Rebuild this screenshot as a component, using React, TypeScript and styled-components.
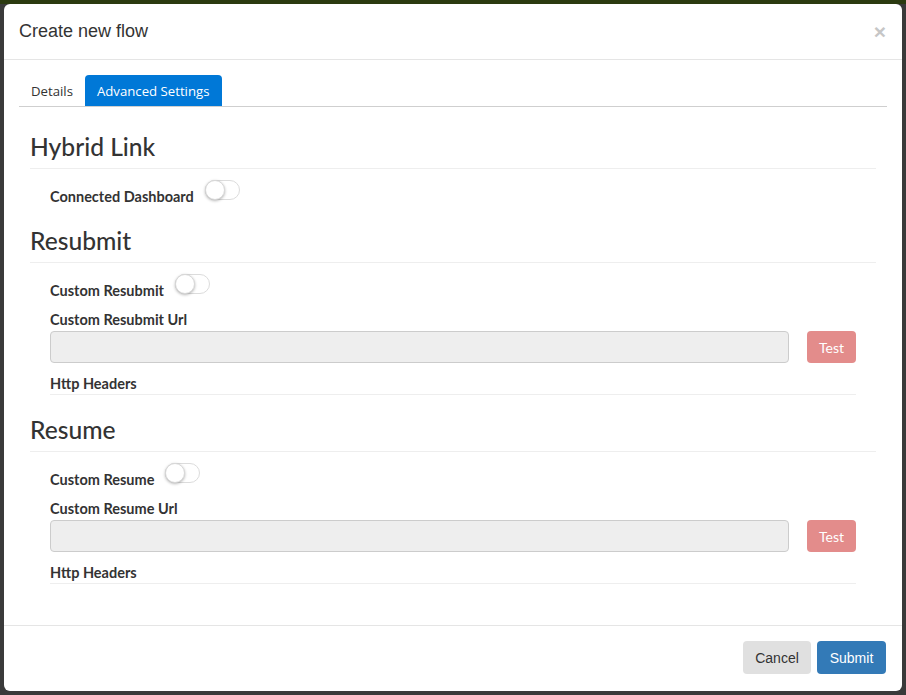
import styled, { createGlobalStyle } from 'styled-components'

const GlobalStyle = createGlobalStyle`
  html, body {
    margin: 0;
    padding: 0;
  }
  body {
    background: linear-gradient(#2b3a10 0, #2b3a10 4px, #3a3a3a 4px);
    font-family: Lato, "Open Sans", sans-serif;
    color: #333;
  }
`

const Backdrop = styled.div`
  padding: 4px;
  height: 687px;
`

const Modal = styled.div`
  width: 898px;
  height: 687px;
  background: #fff;
  border-radius: 6px;
  display: flex;
  flex-direction: column;
  overflow: hidden;
`

const Header = styled.div`
  height: 55px;
  padding: 0 15px;
  border-bottom: 1px solid #e5e5e5;
  display: flex;
  align-items: center;
  justify-content: space-between;
`

const Title = styled.h4`
  margin: 0;
  font-family: "Liberation Sans", Arial, sans-serif;
  font-size: 18px;
  font-weight: normal;
  color: #333;
`

const Close = styled.button`
  border: 0;
  background: none;
  padding: 0;
  margin-right: 1px;
  font-family: "Liberation Sans", Arial, sans-serif;
  font-size: 21px;
  font-weight: bold;
  line-height: 1;
  color: #c6c6c6;
  cursor: pointer;
`

const Body = styled.div`
  flex: 1;
  padding: 15px 15px 0;
`

const Tabs = styled.div`
  display: flex;
  gap: 1px;
  height: 31px;
  border-bottom: 1px solid #cfcfcf;
`

type TabProps = { active?: boolean }

const Tab = styled.div<TabProps>`
  padding: 0 ${(p) => (p.active ? 13 : 11)}px 0 12px;
  display: flex;
  align-items: center;
  font-family: "Open Sans", "Noto Sans", sans-serif;
  font-size: 13.2px;
  border-radius: 4px 4px 0 0;
  background: ${(p) => (p.active ? '#0078d7' : 'transparent')};
  color: ${(p) => (p.active ? '#fff' : '#333')};
`

const Content = styled.div`
  padding: 5px 11px 0;
`

const Section = styled.div`
  padding-top: 22px;
`

const SectionTitle = styled.h3`
  margin: 0;
  font-size: 24.6px;
  font-weight: 500;
  line-height: 26px;
  padding-bottom: 8px;
  border-bottom: 1px solid #eee;
  color: #333;
`

const Fields = styled.div`
  padding: 11px 20px 0;
`

const SwitchRow = styled.div`
  display: flex;
  align-items: flex-start;
  gap: 11px;
  height: 26px;
`

const Label = styled.div`
  font-size: 14.5px;
  font-weight: bold;
  line-height: 18px;
  color: #333;
`

const SwitchLabel = styled(Label)`
  margin-top: 8px;
`

const Switch = styled.div`
  position: relative;
  width: 35px;
  height: 20px;
  box-sizing: border-box;
  border: 1px solid #dcdcdc;
  border-radius: 10px;
  background: #fff;
`

const Knob = styled.div`
  position: absolute;
  left: -1px;
  top: -1px;
  width: 20px;
  height: 20px;
  box-sizing: border-box;
  border-radius: 50%;
  background: #fff;
  border: 1px solid #d8d8d8;
  box-shadow: 0 1px 3px rgba(0, 0, 0, 0.3);
`

const UrlLabel = styled(Label)`
  margin-top: 11px;
`

const InputRow = styled.div`
  display: flex;
  gap: 18px;
  margin-top: 2px;
`

const Input = styled.div`
  flex: 1;
  height: 32px;
  box-sizing: border-box;
  background: #eee;
  border: 1px solid #ccc;
  border-radius: 4px;
`

const TestButton = styled.button`
  width: 49px;
  height: 32px;
  border: 0;
  border-radius: 4px;
  background: #e38c8b;
  color: #fff;
  font-family: Lato, sans-serif;
  font-size: 14px;
  padding: 0;
`

const HeadersLabel = styled(Label)`
  margin-top: 12px;
  padding-bottom: 1px;
  border-bottom: 1px solid #eee;
`

const Footer = styled.div`
  height: 66px;
  border-top: 1px solid #e5e5e5;
  display: flex;
  justify-content: flex-end;
  align-items: flex-start;
  gap: 6px;
  padding: 15px 16px 0;
  box-sizing: border-box;
`

type BtnProps = { primary?: boolean }

const FooterButton = styled.button<BtnProps>`
  height: 33px;
  width: ${(p) => (p.primary ? 69 : 68)}px;
  padding: 0;
  border: 0;
  border-radius: 4px;
  font-family: "Liberation Sans", Arial, sans-serif;
  font-size: 14px;
  background: ${(p) => (p.primary ? '#337ab7' : '#e0e0e0')};
  color: ${(p) => (p.primary ? '#fff' : '#333')};
`

function Toggle() {
  return (
    <Switch>
      <Knob />
    </Switch>
  )
}

function UrlGroup({ name }: { name: string }) {
  return (
    <Fields>
      <SwitchRow>
        <SwitchLabel>Custom {name}</SwitchLabel>
        <Toggle />
      </SwitchRow>
      <UrlLabel>Custom {name} Url</UrlLabel>
      <InputRow>
        <Input />
        <TestButton disabled>Test</TestButton>
      </InputRow>
      <HeadersLabel>Http Headers</HeadersLabel>
    </Fields>
  )
}

export default function App() {
  return (
    <Backdrop>
      <GlobalStyle />
      <Modal>
        <Header>
          <Title>Create new flow</Title>
          <Close>×</Close>
        </Header>
        <Body>
          <Tabs>
            <Tab>Details</Tab>
            <Tab active>Advanced Settings</Tab>
          </Tabs>
          <Content>
            <Section>
              <SectionTitle>Hybrid Link</SectionTitle>
              <Fields>
                <SwitchRow>
                  <SwitchLabel>Connected Dashboard</SwitchLabel>
                  <Toggle />
                </SwitchRow>
              </Fields>
            </Section>
            <Section>
              <SectionTitle>Resubmit</SectionTitle>
              <UrlGroup name="Resubmit" />
            </Section>
            <Section>
              <SectionTitle>Resume</SectionTitle>
              <UrlGroup name="Resume" />
            </Section>
          </Content>
        </Body>
        <Footer>
          <FooterButton>Cancel</FooterButton>
          <FooterButton primary>Submit</FooterButton>
        </Footer>
      </Modal>
    </Backdrop>
  )
}
